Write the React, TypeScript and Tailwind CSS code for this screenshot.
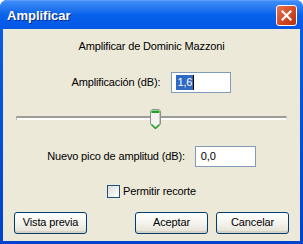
import React from 'react'

const font = "font-['Liberation_Sans',Arial,sans-serif]"

function XpButton({ label, className = '' }: { label: string; className?: string }) {
  return (
    <button
      className={`h-[22px] rounded-[3px] border border-[#003c74] bg-gradient-to-b from-white via-[#f4f3ee] to-[#e3e0d3] text-[11px] text-black leading-none shadow-[inset_0_-2px_0_#d6d0c5] ${className}`}
    >
      {label}
    </button>
  )
}

function Thumb() {
  return (
    <svg width="11" height="21" viewBox="0 0 11 21" className="block">
      <path d="M0.5 3 Q0.5 0.5 3 0.5 H8 Q10.5 0.5 10.5 3 V15 L5.5 20 L0.5 15 Z" fill="#f2f2ee" stroke="#8e8f8f" />
      <path d="M1.5 2 H9.5 V4 H1.5 Z" fill="#21a121" />
      <path d="M1.5 1.5 H9.5" stroke="#7ee07e" />
      <path d="M1.5 15.5 L5.5 19.2 L9.5 15.5" stroke="#21a121" fill="none" strokeWidth="1.4" />
      <path d="M9.5 4 V15" stroke="#c9c8c0" />
    </svg>
  )
}

export default function App() {
  return (
    <div className={`w-[303px] h-[244px] flex flex-col rounded-t-[7px] bg-gradient-to-b from-[#0a5fe8] to-[#0043cf] ${font}`}>
      {/* Title bar */}
      <div className="h-[29px] flex items-center justify-between px-[7px] rounded-t-[7px] bg-gradient-to-b from-[#3d8df6] via-[#0761ea] to-[#0556e6] border-t border-[#5a9cff]">
        <span className="text-white font-bold text-[13px] [text-shadow:1px_1px_0_#0a2a8a] pt-[1px]">Amplificar</span>
        <div className="w-[21px] h-[21px] mr-[-1px] rounded-[3px] border border-white bg-gradient-to-br from-[#e8714f] via-[#d94b26] to-[#b5300e] flex items-center justify-center">
          <svg width="11" height="11" viewBox="0 0 11 11">
            <path d="M1.5 1.5 L9.5 9.5 M9.5 1.5 L1.5 9.5" stroke="white" strokeWidth="2.2" strokeLinecap="square" />
          </svg>
        </div>
      </div>

      {/* Body */}
      <div className="flex-1 mx-[3px] mb-[3px] bg-[#ece9d8] flex flex-col items-center text-[11px] tracking-[-0.15px] text-black">
        <div className="mt-[11px] h-[13px] leading-[13px]">Amplificar de Dominic Mazzoni</div>

        <div className="mt-[19px] flex items-center gap-[11px]">
          <span>Amplificación (dB):</span>
          <div className="w-[60px] h-[21px] border border-[#7f9db9] bg-white flex items-center pl-[4px]">
            <span className="bg-[#316ac5] text-white px-[1px] leading-[15px]">1,6</span>
            <span className="w-[1px] h-[15px] bg-black" />
          </div>
        </div>

        <div className="mt-[16px] w-[271px] h-[21px] relative self-start ml-[13px]">
          <div className="absolute left-0 right-0 top-[7px] h-[4px] rounded-[1px] border-t-2 border-[#9d9c99] bg-white border-l border-r border-l-[#b0afa8] border-r-[#dcdad0]" />
          <div className="absolute left-[134px] top-0">
            <Thumb />
          </div>
        </div>

        <div className="mt-[16px] flex items-center gap-[10px]">
          <span>Nuevo pico de amplitud (dB):</span>
          <div className="w-[61px] h-[21px] border border-[#7f9db9] bg-white flex items-center pl-[5px]">
            0,0
          </div>
        </div>

        <div className="mt-[16px] flex items-center gap-[3px]">
          <div className="w-[13px] h-[13px] border border-[#1c5180] bg-gradient-to-br from-[#dcdcd7] to-white" />
          <span>Permitir recorte</span>
        </div>

        <div className="mt-[12px] w-full flex px-[11px]">
          <XpButton label="Vista previa" className="w-[73px]" />
          <XpButton label="Aceptar" className="w-[73px] ml-[48px]" />
          <XpButton label="Cancelar" className="w-[73px] ml-[8px]" />
        </div>
      </div>
    </div>
  )
}
